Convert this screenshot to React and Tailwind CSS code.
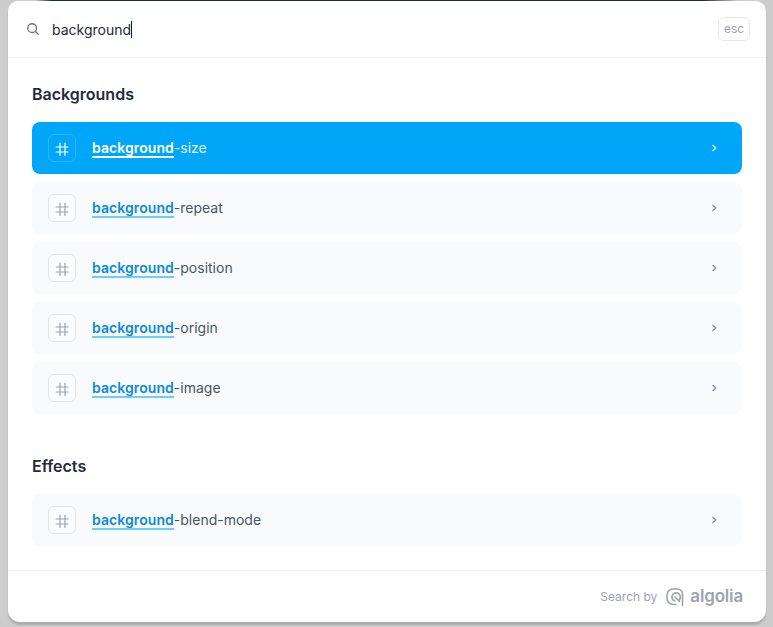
const rows = ["size", "repeat", "position", "origin", "image"];

function Hash({ active }) {
  return (
    <div className={`w-7 h-7 rounded-md border flex items-center justify-center shrink-0 ${active ? "border-[#33b1f7]" : "border-[#e2e5ea] bg-white/40"}`}>
      <svg width="14" height="16" viewBox="0 0 14 16" fill="none" stroke={active ? "#ffffff" : "#9ca3af"} strokeWidth="1.2" strokeLinecap="round">
        <path d="M5 3 V15.5 M10 3 V15.5 M1.2 7 H13 M1.2 12 H13" />
      </svg>
    </div>
  );
}

function Row({ suffix, active }) {
  return (
    <div className={`h-[52px] rounded-lg flex items-center pl-4 pr-6 ${active ? "bg-[#00a6f7]" : "bg-[#f8fafc]"}`}>
      <Hash active={active} />
      <div className="ml-4 text-sm flex-1 flex items-start">
        <span className={`font-semibold border-b-2 leading-[17px] mt-px tracking-[0.005em] ${active ? "text-white border-white" : "text-[#0a8ad9] border-[#6fcdfb]"}`}>background</span>
        <span className={`leading-[17px] mt-px ${active ? "text-white/90" : "text-[#4b5563]"}`}>-{suffix}</span>
      </div>
      <svg width="8" height="10" viewBox="0 0 8 10" fill="none" stroke={active ? "#ffffff" : "#7b8494"} strokeWidth="1.1">
        <path d="M2.6 2 L5.8 5 L2.6 8" />
      </svg>
    </div>
  );
}

export default function App() {
  return (
    <div className="h-[627px] w-[773px] overflow-hidden bg-[#cdcdcd] font-['Inter','Liberation_Sans',sans-serif] flex flex-col">
      <div className="h-px shrink-0 mx-[35px] bg-[linear-gradient(to_right,#cdcdcd,#1f2937_17px,#1f2937_calc(100%-35px),#cdcdcd)]" />
      <div className="h-[621px] shrink-0 mx-2 w-[758px] bg-white rounded-b-xl rounded-t-[10px] flex flex-col shadow-[0_3px_2px_rgba(0,0,0,0.16)]">
        <header className="h-[57px] shrink-0 border-b border-[#f1f2f4] flex items-center pl-[18px] pr-4">
          <svg width="14" height="14" viewBox="0 0 24 24" fill="none" stroke="#6b7280" strokeWidth="2.2" strokeLinecap="round">
            <circle cx="10.5" cy="10.5" r="7.5" />
            <path d="M16 16 L21 21" />
          </svg>
          <div className="ml-3 mt-px text-sm text-[#1f2937] flex-1 flex items-center">
            background<span className="inline-block w-px h-[17px] bg-[#111827]" />
          </div>
          <kbd className="h-6 w-8 rounded-md border border-[#e5e7eb] text-xs text-[#9ca3af] flex items-center justify-center font-['Inter','Liberation_Sans',sans-serif]">esc</kbd>
        </header>
        <main className="flex-1 px-6 flex flex-col">
          <h2 className="mt-[26px] text-base font-semibold leading-5 text-[#252b3a]">Backgrounds</h2>
          <div className="mt-[18px] flex flex-col gap-2">
            {rows.map((r, i) => <Row key={r} suffix={r} active={i === 0} />)}
          </div>
          <h2 className="mt-[42px] text-base font-semibold leading-5 text-[#252b3a]">Effects</h2>
          <div className="mt-[18px]">
            <Row suffix="blend-mode" />
          </div>
        </main>
        <footer className="h-[52px] shrink-0 border-t border-[#f1f2f4] flex items-center justify-end pr-[23px]">
          <span className="text-xs text-[#9ca3af] mr-2">Search by</span>
          <svg width="20" height="20" viewBox="0 0 20 20" fill="none" stroke="#9ca3af" strokeWidth="1.6" strokeLinecap="round" strokeLinejoin="round">
            <path d="M17.5 18.5 V7 A5 5 0 0 0 12.5 2 H8 A6 6 0 0 0 2 8 V11 A6.5 6.5 0 0 0 8.5 17.5 H11" />
            <path d="M13.5 13.5 A4.2 4.2 0 1 0 9.8 14 M10 10 L14.5 14.5" />
          </svg>
          <span className="ml-[5px] text-[17px] tracking-[-0.01em] font-semibold text-[#9ca3af] leading-none">algolia</span>
        </footer>
      </div>
    </div>
  );
}
